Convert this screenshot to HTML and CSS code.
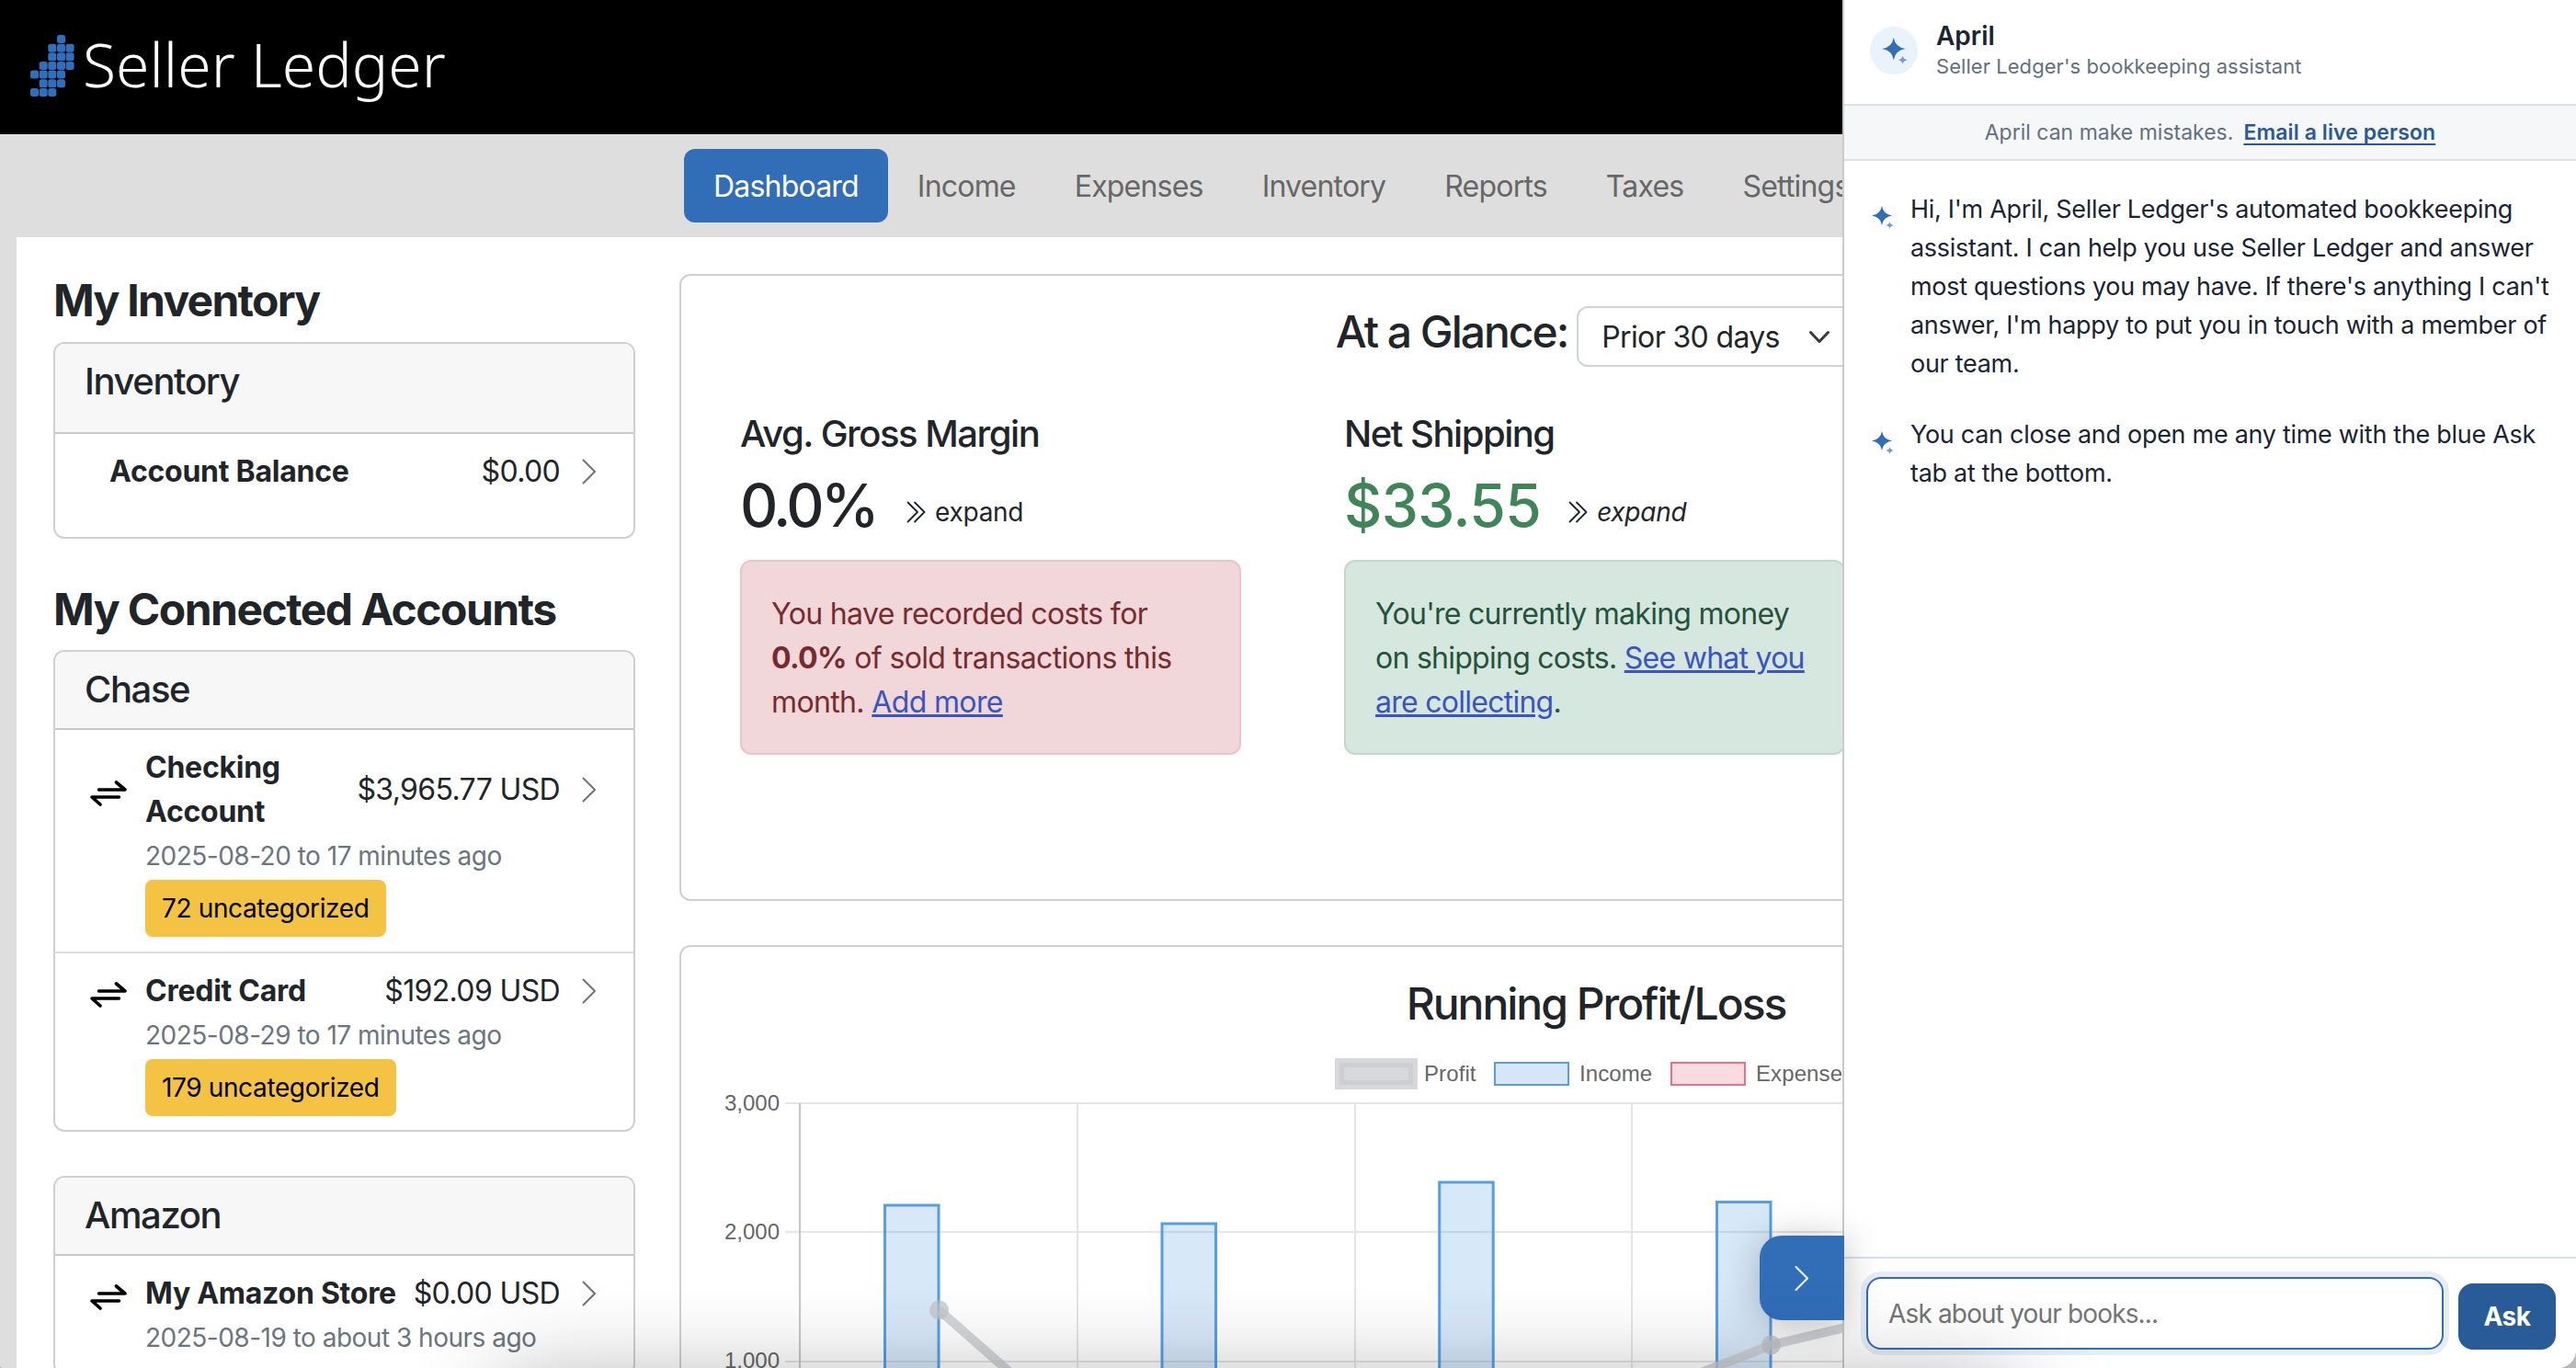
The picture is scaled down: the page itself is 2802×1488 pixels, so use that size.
FILE: index.html
```
<!DOCTYPE html>
<html lang="en">
<head>
    <meta charset="UTF-8">
    <meta name="viewport" content="width=device-width, initial-scale=1.0">
    <title>Seller Ledger - Dashboard</title>
    <link rel="stylesheet" href="styles.css">
</head>
<body>
    <!-- shared icons -->
    <svg class="icon-defs" width="0" height="0">
        <symbol id="chevron" viewBox="0 0 16 28">
            <path d="M1.5 1.5 L14 14 L1.5 26.5" fill="none" stroke="currentColor" stroke-width="2" stroke-linecap="round" stroke-linejoin="round"/>
        </symbol>
        <symbol id="double-chevron" viewBox="0 0 22 24">
            <path d="M1.5 1.5 L12 12 L1.5 22.5 M9 1.5 L19.5 12 L9 22.5" fill="none" stroke="currentColor" stroke-width="1.8" stroke-linecap="round" stroke-linejoin="round"/>
        </symbol>
        <symbol id="swap" viewBox="0 0 40 28">
            <path d="M9.5 10 H38 L28.5 2 M31.5 18 H2 L11 26" fill="none" stroke="#000" stroke-width="3.6" stroke-linecap="round" stroke-linejoin="round"/>
        </symbol>
        <symbol id="sparkle" viewBox="0 0 24 26">
            <path d="M11 0 Q12.5 9 22 10.5 Q12.5 12 11 21 Q9.5 12 0 10.5 Q9.5 9 11 0 Z" fill="#326db8"/>
            <path d="M19.5 17 Q20 20.5 24 21 Q20 21.5 19.5 25 Q19 21.5 15 21 Q19 20.5 19.5 17 Z" fill="#6f9ad0"/>
        </symbol>
    </svg>

    <div class="page">
        <header class="header">
            <svg class="logo-mark" width="48" height="68" viewBox="0 0 48 68" fill="#326fbb">
                <rect x="29" y="0" width="9" height="9" rx="2.5"/>
                <rect x="19.3" y="9.7" width="9" height="9" rx="2.5"/>
                <rect x="29" y="9.7" width="9" height="9" rx="2.5"/>
                <rect x="38.6" y="9.7" width="9" height="9" rx="2.5"/>
                <rect x="19.3" y="19.3" width="9" height="9" rx="2.5"/>
                <rect x="29" y="19.3" width="9" height="9" rx="2.5"/>
                <rect x="38.6" y="19.3" width="9" height="9" rx="2.5"/>
                <rect x="9.7" y="29" width="9" height="9" rx="2.5"/>
                <rect x="19.3" y="29" width="9" height="9" rx="2.5"/>
                <rect x="29" y="29" width="9" height="9" rx="2.5"/>
                <rect x="38.6" y="29" width="9" height="9" rx="2.5"/>
                <rect x="0" y="38.6" width="9" height="9" rx="2.5"/>
                <rect x="9.7" y="38.6" width="9" height="9" rx="2.5"/>
                <rect x="19.3" y="38.6" width="9" height="9" rx="2.5"/>
                <rect x="29" y="38.6" width="9" height="9" rx="2.5"/>
                <rect x="9.7" y="48.3" width="9" height="9" rx="2.5"/>
                <rect x="19.3" y="48.3" width="9" height="9" rx="2.5"/>
                <rect x="29" y="48.3" width="9" height="9" rx="2.5"/>
                <rect x="0" y="58" width="9" height="9" rx="2.5"/>
                <rect x="9.7" y="58" width="9" height="9" rx="2.5"/>
                <rect x="19.3" y="58" width="9" height="9" rx="2.5"/>
            </svg>
            <span class="logo-text">Seller Ledger</span>
        </header>

        <nav class="nav">
            <a class="nav-link active">Dashboard</a>
            <a class="nav-link">Income</a>
            <a class="nav-link">Expenses</a>
            <a class="nav-link">Inventory</a>
            <a class="nav-link">Reports</a>
            <a class="nav-link">Taxes</a>
            <a class="nav-link">Settings</a>
        </nav>

        <main class="content">
            <aside class="sidebar">
                <h2 class="section-title">My Inventory</h2>
                <div class="card inventory-card">
                    <div class="card-header">Inventory</div>
                    <div class="account no-icon">
                        <span class="account-name">Account Balance</span>
                        <span class="amount">$0.00</span>
                        <svg class="chevron"><use href="#chevron"/></svg>
                    </div>
                </div>

                <h2 class="section-title">My Connected Accounts</h2>
                <div class="card">
                    <div class="card-header">Chase</div>
                    <div class="account">
                        <svg class="swap"><use href="#swap"/></svg>
                        <span class="account-name">Checking<br>Account</span>
                        <span class="amount">$3,965.77 USD</span>
                        <svg class="chevron"><use href="#chevron"/></svg>
                        <div class="details">
                            <div class="dates">2025-08-20 to 17 minutes ago</div>
                            <span class="badge">72 uncategorized</span>
                        </div>
                    </div>
                    <div class="account">
                        <svg class="swap"><use href="#swap"/></svg>
                        <span class="account-name">Credit Card</span>
                        <span class="amount">$192.09 USD</span>
                        <svg class="chevron"><use href="#chevron"/></svg>
                        <div class="details">
                            <div class="dates">2025-08-29 to 17 minutes ago</div>
                            <span class="badge">179 uncategorized</span>
                        </div>
                    </div>
                </div>

                <div class="card">
                    <div class="card-header">Amazon</div>
                    <div class="account">
                        <svg class="swap"><use href="#swap"/></svg>
                        <span class="account-name">My Amazon Store</span>
                        <span class="amount">$0.00 USD</span>
                        <svg class="chevron"><use href="#chevron"/></svg>
                        <div class="details">
                            <div class="dates">2025-08-19 to about 3 hours ago</div>
                        </div>
                    </div>
                </div>
            </aside>

            <section class="main">
                <div class="card glance">
                    <div class="glance-head">
                        <h2 class="card-title">At a Glance:</h2>
                        <div class="select">
                            <span>Prior 30 days</span>
                            <svg width="24" height="16" viewBox="0 0 24 16"><path d="M2.5 2.5 L12 12.5 L21.5 2.5" fill="none" stroke="#343a40" stroke-width="3" stroke-linecap="round" stroke-linejoin="round"/></svg>
                        </div>
                    </div>
                    <div class="stats">
                        <div class="stat">
                            <h3 class="stat-title">Avg. Gross Margin</h3>
                            <div class="stat-row">
                                <span class="stat-value percent">0.0%</span>
                                <svg class="expand-icon"><use href="#double-chevron"/></svg>
                                <span class="expand">expand</span>
                            </div>
                            <div class="alert danger">You have recorded costs for<br><b>0.0%</b> of sold transactions this<br>month. <a>Add more</a></div>
                        </div>
                        <div class="stat">
                            <h3 class="stat-title">Net Shipping</h3>
                            <div class="stat-row">
                                <span class="stat-value positive">$33.55</span>
                                <svg class="expand-icon"><use href="#double-chevron"/></svg>
                                <span class="expand"><i>expand</i></span>
                            </div>
                            <div class="alert success">You're currently making money<br>on shipping costs. <a>See what you<br>are collecting</a>.</div>
                        </div>
                    </div>
                </div>

                <div class="card profit">
                    <h2 class="card-title">Running Profit/Loss</h2>
                    <svg class="chart" width="1990" height="400" viewBox="0 0 1990 400">
                        <!-- legend -->
                        <rect x="716" y="36" width="80" height="24" fill="#c9cbcf" fill-opacity=".75"/>
                        <rect x="716" y="36" width="80" height="24" fill="none" stroke="#c9cbcf" stroke-opacity=".75" stroke-width="10"/>
                        <text x="808" y="56">Profit</text>
                        <rect class="income" x="885" y="36" width="80" height="24"/>
                        <text x="977" y="56">Income</text>
                        <rect class="expenses" x="1077" y="36" width="80" height="24"/>
                        <text x="1169" y="56">Expenses</text>

                        <!-- grid -->
                        <path class="grid" d="M113 80 H1960 M113 220 H1960 M113 361 H1960 M431 80 V400 M733 80 V400 M1034 80 V400"/>
                        <path class="axis" d="M129 80 V400"/>
                        <text class="tick" x="107" y="88">3,000</text>
                        <text class="tick" x="107" y="228">2,000</text>
                        <text class="tick" x="107" y="368">1,000</text>

                        <!-- income bars -->
                        <rect class="bar" x="221.5" y="191" width="58.5" height="300"/>
                        <rect class="bar" x="523" y="211" width="58.5" height="300"/>
                        <rect class="bar" x="824.7" y="166" width="58.5" height="300"/>
                        <rect class="bar" x="1126.5" y="187.5" width="58.5" height="300"/>

                        <!-- profit line -->
                        <polyline class="line" points="280.5,305 582,570 884,462 1185.5,343 1487,272"/>
                        <circle class="point" cx="280.5" cy="305" r="10.5"/>
                        <circle class="point" cx="1185.5" cy="343" r="10.5"/>
                    </svg>
                </div>
            </section>
        </main>

        <button class="panel-toggle"><svg class="toggle-icon"><use href="#chevron"/></svg></button>

        <section class="panel">
            <div class="panel-header">
                <div class="avatar"><svg width="28" height="30"><use href="#sparkle"/></svg></div>
                <div>
                    <div class="panel-name">April</div>
                    <div class="panel-subtitle">Seller Ledger's bookkeeping assistant</div>
                </div>
            </div>
            <div class="notice"><span>April can make mistakes.</span><a>Email a live person</a></div>
            <div class="messages">
                <div class="message">
                    <svg class="spark"><use href="#sparkle"/></svg>
                    <p>Hi, I'm April, Seller Ledger's automated bookkeeping<br>assistant. I can help you use Seller Ledger and answer<br>most questions you may have. If there's anything I can't<br>answer, I'm happy to put you in touch with a member of<br>our team.</p>
                </div>
                <div class="message">
                    <svg class="spark"><use href="#sparkle"/></svg>
                    <p>You can close and open me any time with the blue Ask<br>tab at the bottom.</p>
                </div>
            </div>
            <div class="composer">
                <div class="input">Ask about your books...</div>
                <button class="ask">Ask</button>
            </div>
        </section>

        <div class="bottom-shade"></div>
    </div>
</body>
</html>
```
FILE: styles.css
```
* {
    margin: 0;
    padding: 0;
    box-sizing: border-box;
}

body {
    font-family: Inter, "Liberation Sans", sans-serif;
    font-size: 32px;
    line-height: 48px;
    letter-spacing: -0.02em;
    color: #212529;
    background: #b9b9b9;
    overflow: hidden;
}

.icon-defs {
    position: absolute;
}

.page {
    position: relative;
    width: 2802px;
    height: 1488px;
    overflow: hidden;
    border-radius: 0 0 20px 3px;
    background: #dedede;
}

/* header */
.header {
    display: flex;
    height: 146px;
    padding: 38px 0 0 33px;
    background: #000;
}

.logo-mark {
    flex: none;
}

.logo-text {
    margin: -8px 0 0 9px;
    font-family: "Noto Sans", "Open Sans", sans-serif;
    font-weight: 300;
    font-size: 66px;
    line-height: 78px;
    letter-spacing: 0;
    color: #fff;
    white-space: nowrap;
}

.nav {
    display: flex;
    height: 112px;
    padding: 16px 0 16px 744px;
}

.nav-link {
    padding: 17px 32px 15px;
    border-radius: 12px;
    letter-spacing: -0.025em;
    color: #676767;
    white-space: nowrap;
}

.nav-link.active {
    background: #326db8;
    color: #fff;
}

/* content */
.content {
    display: flex;
    height: 1230px;
    margin-left: 18px;
    padding: 40px 0 0 40px;
    background: #fff;
}

.sidebar {
    flex: none;
    width: 633px;
    margin-right: 48px;
}

.section-title {
    margin-bottom: 16px;
    font-size: 48px;
    line-height: 57px;
    font-weight: 700;
    letter-spacing: -0.032em;
}

.section-title:first-child {
    margin-bottom: 17px;
    letter-spacing: -0.036em;
}

.card {
    margin-bottom: 48px;
    border: 2px solid #d0d0d0;
    border-radius: 12px;
    background: #fff;
}

.card-header {
    height: 85px;
    padding: 17px 32px 15px;
    border-bottom: 2px solid #c9c9c9;
    border-radius: 10px 10px 0 0;
    background: #f7f7f7;
    font-size: 40px;
    font-weight: 500;
    letter-spacing: -0.035em;
}

.inventory-card {
    height: 214px;
}

.inventory-card .card-header {
    height: 98px;
}

.account {
    display: grid;
    grid-template-columns: 40px 1fr auto 16px;
    align-items: center;
    padding: 17px 40px 16px 38px;
}

.account:last-child {
    padding-bottom: 15px;
}

.account + .account {
    border-top: 2px solid #dedede;
}

.account.no-icon {
    grid-template-columns: 1fr auto 16px;
    padding-left: 59px;
}

.swap {
    width: 40px;
    height: 28px;
    margin-top: 7px;
}

.account-name {
    margin-left: 20px;
    font-weight: 700;
    letter-spacing: -0.008em;
}

.no-icon .account-name {
    margin-left: 0;
}

.amount {
    margin-right: 24px;
}

.chevron {
    width: 16px;
    height: 28px;
    color: #6c757d;
}

.details {
    grid-column: 2 / 5;
    margin-left: 20px;
}

.dates {
    font-size: 28px;
    letter-spacing: -0.018em;
    color: #6c757d;
}

.badge {
    display: block;
    width: max-content;
    margin-top: 2px;
    padding: 7px 18px;
    border-radius: 8px;
    background: #f4c344;
    font-size: 28px;
    letter-spacing: -0.013em;
    color: #000;
}

/* dashboard cards */
.main {
    flex: none;
    width: 1994px;
}

.glance {
    height: 682px;
}

.card-title {
    font-size: 48px;
    line-height: 57px;
    font-weight: 500;
    letter-spacing: -0.042em;
    text-align: center;
}

.glance-head {
    display: flex;
    justify-content: center;
    padding-top: 32px;
}

.select {
    display: flex;
    align-items: center;
    width: 304px;
    height: 66px;
    margin: 1px 0 0 10px;
    padding: 2px 0 0 25px;
    border: 2px solid #ced4da;
    border-radius: 12px;
}

.select svg {
    margin-left: 31px;
}

.stats {
    display: flex;
    gap: 112px;
    padding: 49px 64px;
}

.stat {
    width: 545px;
    flex: none;
}

.stat-title {
    font-size: 40px;
    line-height: 48px;
    font-weight: 500;
    letter-spacing: -0.037em;
}

.stat-row {
    display: flex;
    align-items: baseline;
    height: 77px;
    margin: 15px 0 21px;
}

.stat-value {
    font-size: 64px;
    line-height: 77px;
    font-weight: 500;
}

.percent {
    letter-spacing: -0.055em;
}

.positive {
    color: #408558;
}

.expand-icon {
    width: 22px;
    height: 24px;
    align-self: flex-start;
    margin: 34px 9px 0 30px;
}

.percent + .expand-icon {
    margin-left: 33px;
}

.expand {
    position: relative;
    top: -6px;
    font-size: 28px;
    letter-spacing: -0.01em;
}

.alert {
    padding: 33px 32px 31px;
    border: 2px solid;
    border-radius: 12px;
    white-space: nowrap;
}

.alert a {
    color: #3a55c0;
    text-decoration: underline;
}

.danger {
    background: #f2d7da;
    border-color: #eec3c8;
    color: #782b2f;
}

.success {
    background: #d6e7df;
    border-color: #bfd9cd;
    letter-spacing: -0.023em;
    color: #25523a;
}

/* chart */
.profit {
    height: 600px;
    padding-top: 33px;
}

.chart {
    display: block;
}

.chart text {
    font-family: "Liberation Sans", Arial, sans-serif;
    font-size: 24px;
    letter-spacing: 0.1px;
    fill: #666;
}

.chart .tick {
    letter-spacing: 0;
    text-anchor: end;
}

.income {
    fill: #d6e6f8;
    stroke: #569fe5;
    stroke-width: 2;
}

.expenses {
    fill: #f9dbe0;
    stroke: #ec6f87;
    stroke-width: 2;
}

.grid {
    fill: none;
    stroke: #000;
    stroke-opacity: 0.1;
    stroke-width: 2;
}

.axis {
    stroke: #c6c6c6;
    stroke-width: 2;
}

.bar {
    fill: rgba(86, 159, 229, 0.24);
    stroke: #569fe5;
    stroke-width: 3;
}

.line {
    fill: none;
    stroke: #c9cbcf;
    stroke-opacity: 0.8;
    stroke-width: 10;
}

.point {
    fill: #c0c2c6;
    fill-opacity: 0.7;
}

/* assistant */
.panel-toggle {
    position: absolute;
    top: 1344px;
    left: 1914px;
    display: flex;
    align-items: center;
    width: 92px;
    height: 92px;
    padding-left: 38px;
    border: 0;
    border-radius: 24px 0 0 24px;
    background: #326db8;
    color: #fff;
    box-shadow: 0 4px 40px rgba(0, 0, 0, 0.25);
    z-index: 1;
}

.toggle-icon {
    width: 16px;
    height: 29px;
}

.panel {
    position: absolute;
    top: 0;
    right: 0;
    display: flex;
    flex-direction: column;
    width: 798px;
    height: 1488px;
    border-left: 2px solid #cbcbcb;
    background: #fff;
    color: #1a2433;
}

.panel-header {
    display: flex;
    height: 115px;
    padding: 18px 28px 0;
    border-bottom: 2px solid #dce1e8;
}

.avatar {
    width: 52px;
    height: 52px;
    margin: 11px 20px 0 0;
    padding: 12px 0 0 13px;
    border-radius: 50%;
    background: #eaf2fb;
    line-height: 0;
}

.panel-name {
    font-size: 28px;
    line-height: 42px;
    font-weight: 600;
    letter-spacing: 0;
}

.panel-subtitle {
    font-size: 22px;
    line-height: 25px;
    letter-spacing: 0.05px;
    color: #64707f;
}

.notice {
    display: flex;
    justify-content: center;
    gap: 11px;
    height: 60px;
    padding-top: 13px;
    border-bottom: 2px solid #dce1e8;
    background: #f5f7f9;
    font-size: 23px;
    line-height: 32px;
    letter-spacing: 0;
    color: #64707f;
}

.notice a {
    color: #2a5a96;
    font-weight: 600;
    letter-spacing: 0.1px;
    text-decoration: underline;
    text-decoration-thickness: 2px;
    text-underline-offset: 4px;
    text-decoration-skip-ink: none;
}

.messages {
    flex: 1;
    padding: 32px 30px;
}

.message {
    display: flex;
    margin-bottom: 35px;
    font-size: 27px;
    line-height: 42px;
    letter-spacing: -0.011em;
    white-space: nowrap;
}

.spark {
    flex: none;
    width: 24px;
    height: 26px;
    margin: 17px 18px 0 0;
}

.composer {
    display: flex;
    gap: 16px;
    height: 121px;
    padding: 20px 22px 0 24px;
    border-top: 2px solid #dce1e8;
    font-size: 28px;
}

.input {
    width: 628px;
    height: 79px;
    padding: 14px 22px;
    border: 2px solid #326db8;
    border-radius: 16px;
    box-shadow: 0 0 0 6px #e6edf7;
    letter-spacing: -0.03em;
    color: #757575;
}

.ask {
    width: 106px;
    height: 72px;
    margin-top: 7px;
    border: 0;
    border-radius: 16px;
    background: #285b97;
    color: #fff;
    font: 700 28px Inter, sans-serif;
    letter-spacing: -0.02em;
}

/* soft shade along the lower edge */
.bottom-shade {
    position: absolute;
    top: 1500px;
    left: 545px;
    width: 1645px;
    height: 200px;
    box-shadow: 0 0 100px rgba(0, 0, 0, 0.3);
    z-index: 2;
}
```
